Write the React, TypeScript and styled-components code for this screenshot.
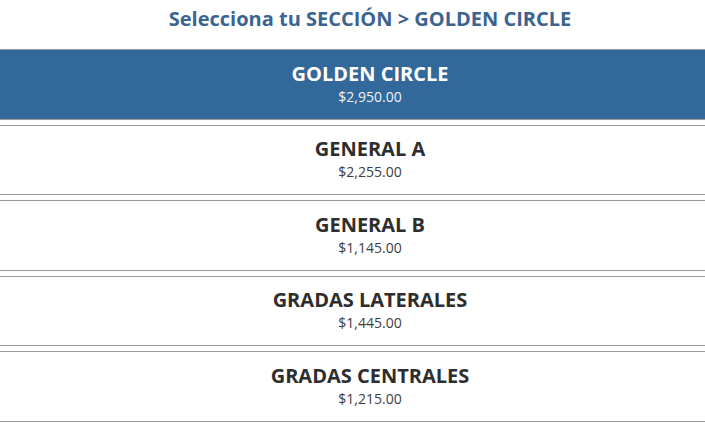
import React from 'react';
import styled, { createGlobalStyle } from 'styled-components';

const GlobalStyle = createGlobalStyle`
  body {
    margin: 0;
    background: #fff;
    overflow: hidden;
    font-family: "Open Sans", "Liberation Sans", sans-serif;
  }
`;

const sections = [
  { name: 'GOLDEN CIRCLE', price: '$2,950.00' },
  { name: 'GENERAL A', price: '$2,255.00' },
  { name: 'GENERAL B', price: '$1,145.00' },
  { name: 'GRADAS LATERALES', price: '$1,445.00' },
  { name: 'GRADAS CENTRALES', price: '$1,215.00' },
];

const App: React.FC = () => {
  const selected = 0;
  return (
    <>
      <GlobalStyle />
      <Page>
        <Heading>Selecciona tu SECCIÓN &gt; {sections[selected].name}</Heading>
        <List>
          {sections.map((s, i) => (
            <Item key={s.name} active={i === selected}>
              <Name>{s.name}</Name>
              <Price>{s.price}</Price>
            </Item>
          ))}
        </List>
      </Page>
    </>
  );
};

// the section column is wider than the window, so the text sits a bit right of centre
const Page = styled.div`
  width: 740px;
  display: flex;
  flex-direction: column;
`;

const Heading = styled.h2`
  margin: 0;
  height: 49px;
  padding-top: 5px;
  box-sizing: border-box;
  text-align: center;
  font-size: 20px;
  font-weight: 700;
  line-height: 28px;
  color: #3b6491;
`;

const List = styled.div`
  display: flex;
  flex-direction: column;
  gap: 5px;
`;

const Item = styled.div<{ active?: boolean }>`
  height: 70.5px;
  box-sizing: border-box;
  border-top: 1px solid #9a9a9a;
  border-bottom: 1px solid #9a9a9a;
  background: ${(p) => (p.active ? '#33689a' : '#fff')};
  color: ${(p) => (p.active ? '#fff' : '#2e2e2e')};
  display: flex;
  flex-direction: column;
  align-items: center;
  justify-content: center;
  padding-bottom: 1px;
`;

const Name = styled.div`
  font-size: 20px;
  font-weight: 700;
  line-height: 26px;
`;

const Price = styled.div`
  font-size: 14px;
  line-height: 20px;
  opacity: 0.92;
`;

export default App;
